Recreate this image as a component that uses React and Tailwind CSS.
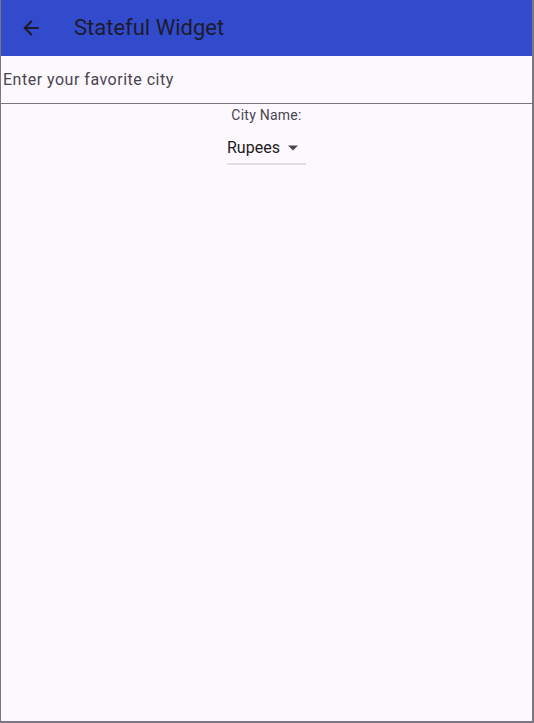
export default function App() {
  return (
    <div className="h-[723px] w-[534px] bg-[#fdf7fe] flex flex-col overflow-hidden" style={{ fontFamily: 'Roboto, "Noto Sans", sans-serif' }}>
      <div className="flex-1 flex flex-col border-l border-r-2 border-b-2 border-[#7a7780] min-h-0">
        {/* App bar */}
        <div className="h-14 bg-[#314bcc] flex items-center shrink-0">
          <button className="w-[58px] h-14 flex items-center justify-center pl-[2px]">
            <svg width="20" height="20" viewBox="0 0 24 24" fill="none" stroke="#1c1b2a" strokeWidth="2.4" strokeLinecap="square">
              <path d="M20 12H5" />
              <path d="M12 4.5L4.5 12L12 19.5" />
            </svg>
          </button>
          <h1 className="ml-[15px] text-[22px] text-[#1d1b2c] leading-none">Stateful Widget</h1>
        </div>

        {/* Text field */}
        <div className="h-12 flex items-center border-b border-[#79747e] shrink-0">
          <span className="pl-[2px] text-[16px] text-[#49454f] tracking-[0.5px]">Enter your favorite city</span>
        </div>

        {/* Dropdown */}
        <div className="flex flex-col items-center">
          <p className="mt-[1px] text-[14px] text-[#49454f] leading-5 tracking-[0.25px]">City Name:</p>
          <div className="mt-[8px] w-[79px] h-[32px] border-b-2 border-[#e0dde3] flex items-center pr-2">
            <span className="text-[16px] text-[#1d1b20] leading-6">Rupees</span>
            <svg className="ml-[8px]" width="10" height="6" viewBox="0 0 10 5">
              <path d="M0 0L5 5L10 0Z" fill="#49454f" />
            </svg>
          </div>
        </div>
      </div>
    </div>
  )
}
